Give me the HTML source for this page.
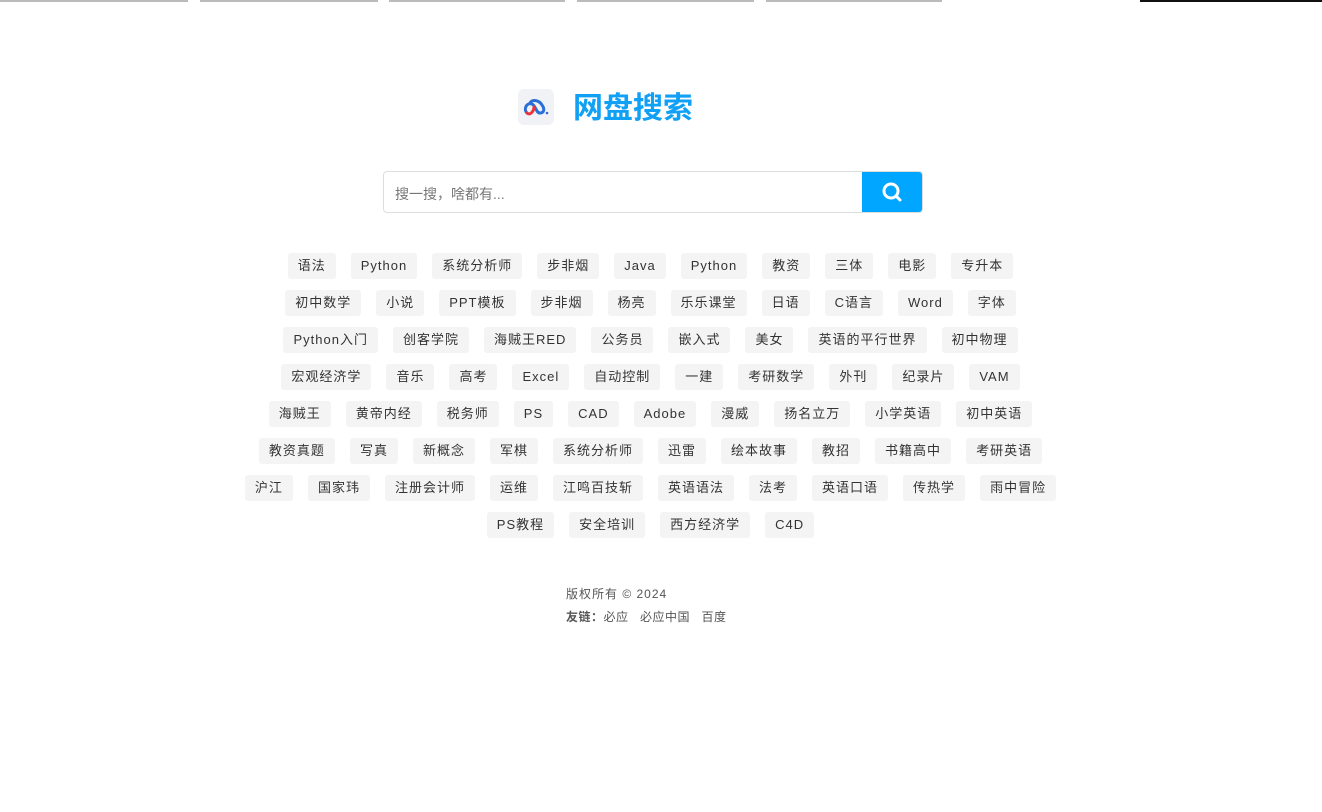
<!DOCTYPE html>
<html><head><meta charset="utf-8"><style>
*{margin:0;padding:0;box-sizing:border-box}
body{width:1322px;height:812px;background:#fff;font-family:"Liberation Sans","Noto Sans CJK SC",sans-serif;position:relative;overflow:hidden}
.bar{position:absolute;top:0;height:2px;background:#bbb}
.logo{position:absolute;left:518px;top:89px;width:36px;height:36px;border-radius:6px;background:#f0f2f5}
.title{position:absolute;left:573px;top:89px;font-size:30px;font-weight:bold;color:#10a0f5;letter-spacing:0px;line-height:40px}
.search{position:absolute;left:383px;top:171px;width:540px;height:42px;border:1px solid #ddd;border-radius:4px;overflow:hidden}
.search span{position:absolute;left:11px;top:12px;font-size:14px;color:#777}
.btn{position:absolute;right:0;top:-1px;width:60px;height:42px;background:#00a6ff}
.tags{position:absolute;left:0;top:253px;width:1301px}
.row{display:flex;justify-content:center;gap:15px;height:26px;margin-bottom:11px}
.row span{background:#f4f4f4;border-radius:3px;padding:0 10px;font-size:13px;line-height:26px;color:#333;letter-spacing:1px;white-space:nowrap}
.foot{position:absolute;left:566px;font-size:12px;color:#555;letter-spacing:1px}
</style></head><body>
<div class="bar" style="left:0;width:188px"></div>
<div class="bar" style="left:200px;width:178px"></div>
<div class="bar" style="left:389px;width:176px"></div>
<div class="bar" style="left:577px;width:177px"></div>
<div class="bar" style="left:766px;width:176px"></div>
<div class="bar" style="left:1140px;width:182px;background:#111"></div>
<div class="logo"><svg width="36" height="36" viewBox="0 0 36 36"><path d="M9 24 C5 20 9 13 14 15 C18 17 18 24 22 24 C26 24 27 20 24 16 C21 11 14 10 12 14" fill="none" stroke="#2a6fd6" stroke-width="3" stroke-linecap="round"/><path d="M9 24 C12 27 16 22 16 18" fill="none" stroke="#e8343c" stroke-width="3" stroke-linecap="round"/><circle cx="29" cy="24" r="1.3" fill="#2a6fd6"/></svg></div>
<div class="title">网盘搜索</div>
<div class="search"><span>搜一搜，啥都有...</span><div class="btn"><svg width="60" height="42" viewBox="0 0 60 42"><circle cx="29" cy="20" r="7" fill="none" stroke="#fff" stroke-width="3"/><path d="M34 25 L38 29" stroke="#fff" stroke-width="3" stroke-linecap="round"/></svg></div></div>
<div class="tags">
<div class="row"><span>语法</span><span>Python</span><span>系统分析师</span><span>步非烟</span><span>Java</span><span>Python</span><span>教资</span><span>三体</span><span>电影</span><span>专升本</span></div>
<div class="row"><span>初中数学</span><span>小说</span><span>PPT模板</span><span>步非烟</span><span>杨亮</span><span>乐乐课堂</span><span>日语</span><span>C语言</span><span>Word</span><span>字体</span></div>
<div class="row"><span>Python入门</span><span>创客学院</span><span>海贼王RED</span><span>公务员</span><span>嵌入式</span><span>美女</span><span>英语的平行世界</span><span>初中物理</span></div>
<div class="row"><span>宏观经济学</span><span>音乐</span><span>高考</span><span>Excel</span><span>自动控制</span><span>一建</span><span>考研数学</span><span>外刊</span><span>纪录片</span><span>VAM</span></div>
<div class="row"><span>海贼王</span><span>黄帝内经</span><span>税务师</span><span>PS</span><span>CAD</span><span>Adobe</span><span>漫威</span><span>扬名立万</span><span>小学英语</span><span>初中英语</span></div>
<div class="row"><span>教资真题</span><span>写真</span><span>新概念</span><span>军棋</span><span>系统分析师</span><span>迅雷</span><span>绘本故事</span><span>教招</span><span>书籍高中</span><span>考研英语</span></div>
<div class="row"><span>沪江</span><span>国家玮</span><span>注册会计师</span><span>运维</span><span>江鸣百技斩</span><span>英语语法</span><span>法考</span><span>英语口语</span><span>传热学</span><span>雨中冒险</span></div>
<div class="row"><span>PS教程</span><span>安全培训</span><span>西方经济学</span><span>C4D</span></div>
</div>
<div class="foot" style="top:585px">版权所有 © 2024</div>
<div class="foot" style="top:608px;letter-spacing:0.5px"><b>友链：</b>必应&nbsp;&nbsp; 必应中国&nbsp;&nbsp; 百度</div>
</body></html>
